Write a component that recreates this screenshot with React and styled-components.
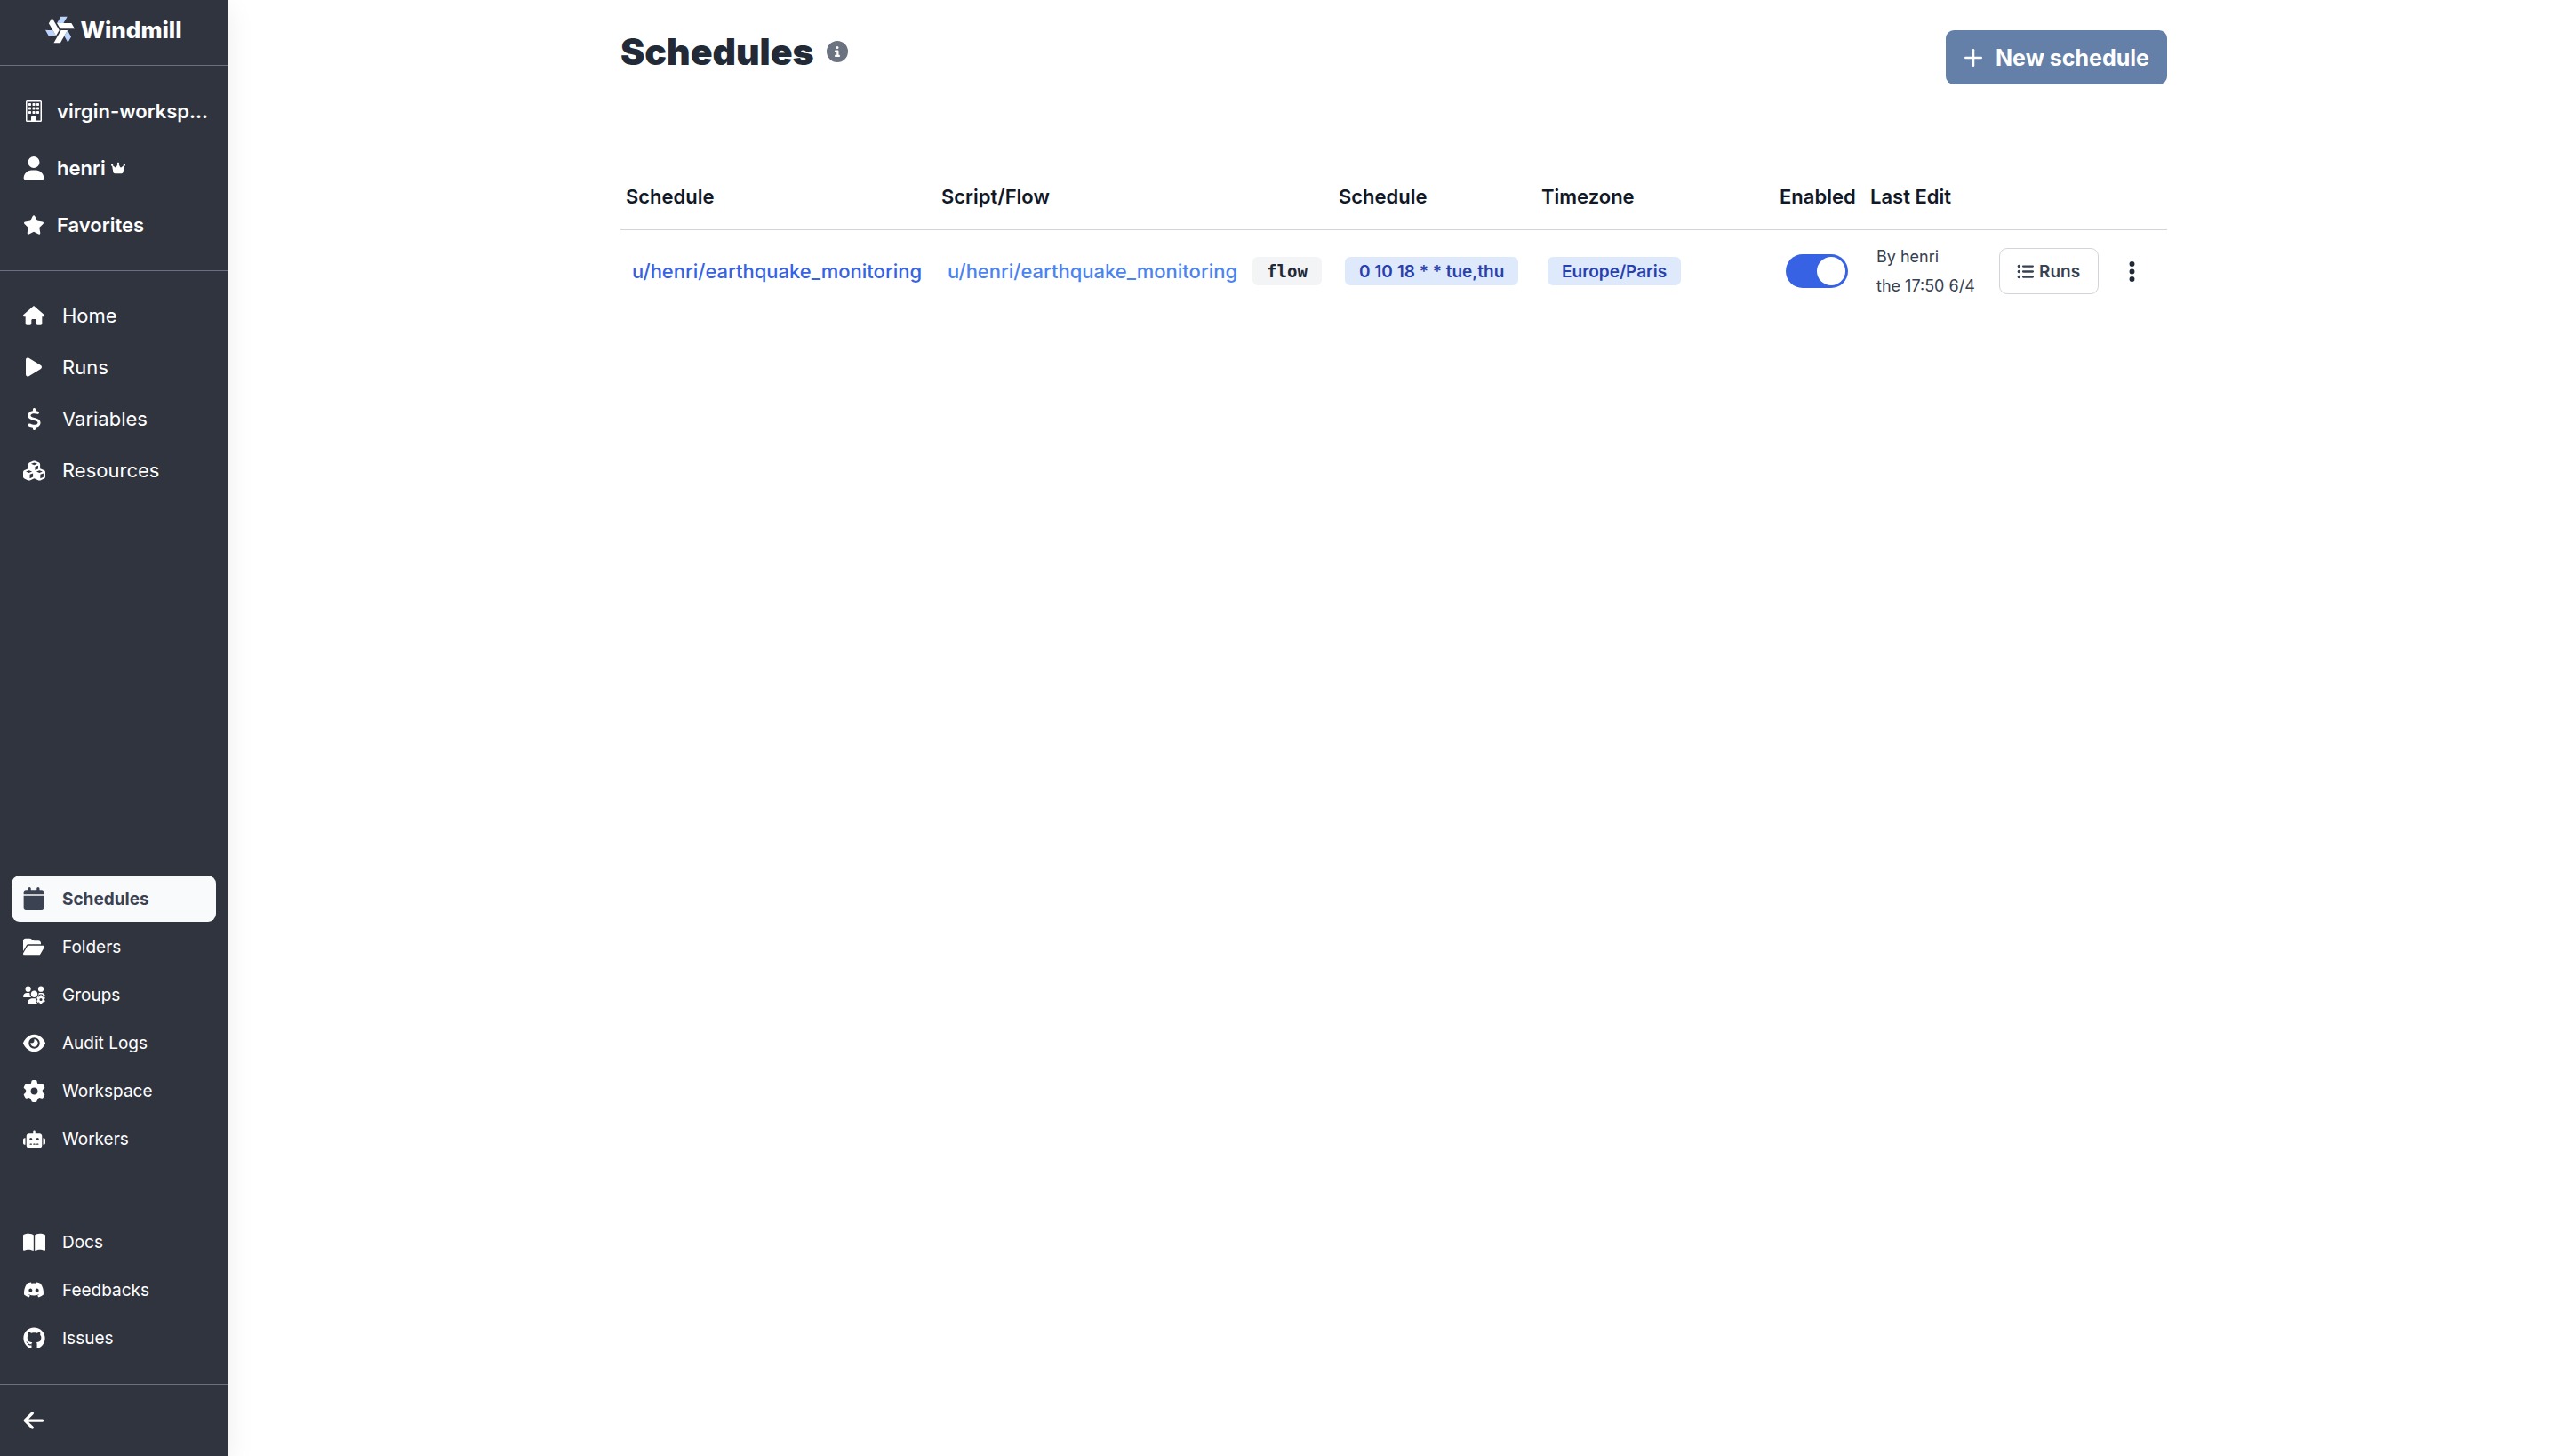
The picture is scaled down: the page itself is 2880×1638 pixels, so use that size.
import React, { useState } from 'react';
import styled, { createGlobalStyle } from 'styled-components';
import {
  FaUser, FaStar, FaCrown, FaHouse, FaPlay, FaDollarSign, FaCubes, FaCalendar,
  FaFolderOpen, FaUsersGear, FaEye, FaGear, FaRobot, FaBookOpen, FaDiscord,
  FaGithub, FaArrowLeft, FaEllipsisVertical, FaCircleInfo, FaListUl,
} from 'react-icons/fa6';
import { BsBuilding } from 'react-icons/bs';
import { LuPlus } from 'react-icons/lu';

const GlobalStyle = createGlobalStyle`
  *, *::before, *::after { box-sizing: border-box; }
  body {
    margin: 0;
    background: #fff;
    color: #374151;
    font-family: Inter, "Liberation Sans", sans-serif;
  }
  a { color: inherit; text-decoration: none; }
  button { font-family: inherit; cursor: pointer; }
`;

const Layout = styled.div`
  display: flex;
  min-height: 100vh;
`;

const Sidebar = styled.aside`
  display: flex;
  flex-direction: column;
  flex: 0 0 256px;
  width: 256px;
  min-width: 0;
  background: #30343f;
  color: #fff;
  box-shadow: 0 8px 30px rgba(0, 0, 0, 0.08);
`;

const Brand = styled.a`
  display: flex;
  align-items: center;
  justify-content: center;
  gap: 6px;
  height: 74px;
  padding-bottom: 7px;
  border-bottom: 1px solid #6b7080;
  font-size: 26px;
  font-weight: 800;
`;

const Group = styled.nav`
  display: flex;
  flex-direction: column;
  gap: ${(p) => p.$gap}px;
  padding: ${(p) => p.$pad || '0 13px'};
  margin-top: ${(p) => (p.$push ? 'auto' : '0')};
  border-bottom: ${(p) => (p.$divided ? '1px solid #6b7080' : '0')};
`;

const Item = styled.a`
  display: flex;
  align-items: center;
  gap: ${(p) => (p.$account ? 13 : 19)}px;
  height: 52px;
  padding: 0 12px;
  border-radius: 9px;
  background: ${(p) => (p.$active ? '#f9fafb' : 'transparent')};
  font-size: ${(p) => (p.$small ? 19 : 22)}px;
  font-weight: ${(p) => (p.$active ? 700 : p.$account ? 600 : 400)};
  && { color: ${(p) => (p.$active ? '#3b4252' : '#fff')}; }
`;

const IconBox = styled.span`
  display: flex;
  align-items: center;
  justify-content: center;
  flex: 0 0 26px;
  font-size: ${(p) => p.$size || 26}px;
`;

const Label = styled.span`
  display: flex;
  align-items: center;
  gap: 6px;
  white-space: nowrap;
`;

const Collapse = styled.button`
  display: flex;
  align-items: center;
  height: 81px;
  padding: 0 25px;
  border: 0;
  border-top: 1px solid #6b7080;
  background: none;
  color: #fff;
`;

const Main = styled.main`
  flex: 1;
  min-width: 0;
  padding: 0 32px;
`;

const Content = styled.div`
  max-width: 1740px;
  margin: 0 auto;
`;

const PageHeader = styled.header`
  display: flex;
  align-items: flex-start;
  justify-content: space-between;
  padding: 34px 0 90px;
`;

const Title = styled.h1`
  display: flex;
  align-items: center;
  gap: 14px;
  margin: 0;
  color: #222a37;
  font-size: 41px;
  font-weight: 900;
  line-height: 48px;
`;

const Info = styled.span`
  display: flex;
  color: #6b7280;
  font-size: 24px;
`;

const PrimaryButton = styled.button`
  display: flex;
  align-items: center;
  gap: 10px;
  height: 61px;
  padding: 0 20px 0 16px;
  border: 0;
  border-radius: 9px;
  background: #6580a8;
  color: #fff;
  font-size: 25px;
  font-weight: 700;
`;

const Table = styled.table`
  width: 100%;
  table-layout: fixed;
  border-collapse: collapse;
`;

const Col = styled.col`
  width: ${(p) => p.$w};
`;

const Th = styled.th`
  height: 73px;
  padding: 0 6px;
  border-bottom: 1px solid #d1d5db;
  color: #111827;
  font-size: 22px;
  font-weight: 600;
  text-align: left;
  white-space: nowrap;
`;

const Td = styled.td`
  height: 94px;
  padding: 0 13px;
  font-size: 22px;
  vertical-align: middle;
  white-space: nowrap;
`;

const Inline = styled.div`
  display: flex;
  align-items: center;
  gap: ${(p) => p.$gap || 0}px;
`;

const PathLink = styled.a`
  && { color: ${(p) => (p.$light ? '#4b83f0' : '#3662e3')}; }
  font-weight: 500;
`;

const Badge = styled.span`
  display: inline-flex;
  align-items: center;
  height: 32px;
  padding: 0 16px;
  border-radius: 6px;
  background: #dee9fb;
  color: #2840ab;
  font-size: 19px;
  font-weight: 600;
`;

const KindBadge = styled(Badge)`
  background: #f3f4f6;
  color: #1f2937;
  font-family: "DejaVu Sans Mono", monospace;
  font-weight: 700;
`;

const Toggle = styled.input`
  appearance: none;
  display: flex;
  align-items: center;
  width: 70px;
  height: 38px;
  margin: 0;
  padding: 3px;
  border-radius: 19px;
  background: ${(p) => (p.checked ? '#3662e3' : '#d1d5db')};
  justify-content: ${(p) => (p.checked ? 'flex-end' : 'flex-start')};
  cursor: pointer;
  &::before {
    content: '';
    width: 32px;
    height: 32px;
    border-radius: 50%;
    background: #fff;
  }
`;

const Edited = styled.div`
  font-size: 18px;
  line-height: 33px;
`;

const OutlineButton = styled.button`
  display: flex;
  align-items: center;
  gap: 6px;
  height: 52px;
  padding: 0 20px 0 19px;
  border: 1px solid #d1d5db;
  border-radius: 9px;
  background: #fff;
  color: #374151;
  font-size: 19px;
  font-weight: 600;
`;

const IconButton = styled.button`
  display: flex;
  padding: 0;
  border: 0;
  background: none;
  color: #1f2937;
  font-size: 27px;
`;

const bladeLight = '134.78,14.22 114.31,48.21 101.33,69.75 158.22,69.75 177.97,36.95 191.67,14.22';

const Logo = () => (
  <svg width="33" height="33" viewBox="0 0 256 256" aria-hidden="true">
    <g fill="#bcd4fc">
      <polygon points={bladeLight} />
      <polygon points={bladeLight} transform="rotate(120 129.47 127.8)" />
      <polygon points={bladeLight} transform="rotate(240 129.47 127.8)" />
    </g>
    <g fill="#fff">
      <polygon points="227.55,69.75 101.33,69.75 129.78,119.02 256,119.02" />
      <polygon points="136.93,132.47 73.82,241.78 130.71,241.79 193.82,132.46" />
      <polygon points="121.7,131.95 58.59,22.63 30.15,71.91 93.26,181.22" />
    </g>
  </svg>
);

const primary = [
  ['Home', FaHouse, 24], ['Runs', FaPlay, 24], ['Variables', FaDollarSign, 25], ['Resources', FaCubes, 25],
];
const secondary = [
  ['Schedules', FaCalendar, 26], ['Folders', FaFolderOpen, 24], ['Groups', FaUsersGear, 25],
  ['Audit Logs', FaEye, 25], ['Workspace', FaGear, 25], ['Workers', FaRobot, 25],
];
const help = [['Docs', FaBookOpen, 25], ['Feedbacks', FaDiscord, 24], ['Issues', FaGithub, 25]];

const Items = ({ entries, small, active }) =>
  entries.map(([name, Icon, size]) => (
    <Item key={name} href="#" $small={small} $active={name === active} aria-current={name === active ? 'page' : undefined}>
      <IconBox $size={size}><Icon /></IconBox>
      <Label>{name}</Label>
    </Item>
  ));

export default function App() {
  const [enabled, setEnabled] = useState(true);
  return (
    <>
      <GlobalStyle />
      <Layout>
        <Sidebar>
          <Brand href="#"><Logo />Windmill</Brand>
          <Group $gap={12} $pad="25px 13px" $divided>
            <Item href="#" $account><IconBox $size={24}><BsBuilding /></IconBox><Label>virgin-worksp...</Label></Item>
            <Item href="#" $account><IconBox><FaUser /></IconBox><Label>henri <FaCrown size={16} /></Label></Item>
            <Item href="#" $account><IconBox $size={24}><FaStar /></IconBox><Label>Favorites</Label></Item>
          </Group>
          <Group $gap={6} $pad="24px 13px 0"><Items entries={primary} /></Group>
          <Group $gap={2} $push><Items entries={secondary} small active="Schedules" /></Group>
          <Group $gap={2} $pad="64px 13px 26px"><Items entries={help} small /></Group>
          <Collapse aria-label="Collapse sidebar"><IconBox><FaArrowLeft /></IconBox></Collapse>
        </Sidebar>
        <Main>
          <Content>
            <PageHeader>
              <Title>Schedules <Info><FaCircleInfo /></Info></Title>
              <PrimaryButton><LuPlus size={30} />New schedule</PrimaryButton>
            </PageHeader>
            <Table>
              <colgroup>
                <Col $w="355px" /><Col $w="447px" /><Col $w="228px" /><Col $w="auto" />
                <Col $w="102px" /><Col $w="138px" /><Col $w="202px" />
              </colgroup>
              <thead>
                <tr>
                  <Th>Schedule</Th><Th>Script/Flow</Th><Th>Schedule</Th><Th>Timezone</Th>
                  <Th>Enabled</Th><Th>Last Edit</Th><Th aria-label="Actions" />
                </tr>
              </thead>
              <tbody>
                <tr>
                  <Td><PathLink href="#">u/henri/earthquake_monitoring</PathLink></Td>
                  <Td>
                    <Inline $gap={17}>
                      <PathLink href="#" $light>u/henri/earthquake_monitoring</PathLink>
                      <KindBadge>flow</KindBadge>
                    </Inline>
                  </Td>
                  <Td><Inline><Badge>0 10 18 * * tue,thu</Badge></Inline></Td>
                  <Td><Inline><Badge>Europe/Paris</Badge></Inline></Td>
                  <Td>
                    <Toggle type="checkbox" role="switch" aria-label="Enabled" checked={enabled} onChange={(e) => setEnabled(e.target.checked)} />
                  </Td>
                  <Td><Edited>By henri<br />the 17:50 6/4</Edited></Td>
                  <Td>
                    <Inline $gap={24}>
                      <OutlineButton><FaListUl />Runs</OutlineButton>
                      <IconButton aria-label="More actions"><FaEllipsisVertical /></IconButton>
                    </Inline>
                  </Td>
                </tr>
              </tbody>
            </Table>
          </Content>
        </Main>
      </Layout>
    </>
  );
}
